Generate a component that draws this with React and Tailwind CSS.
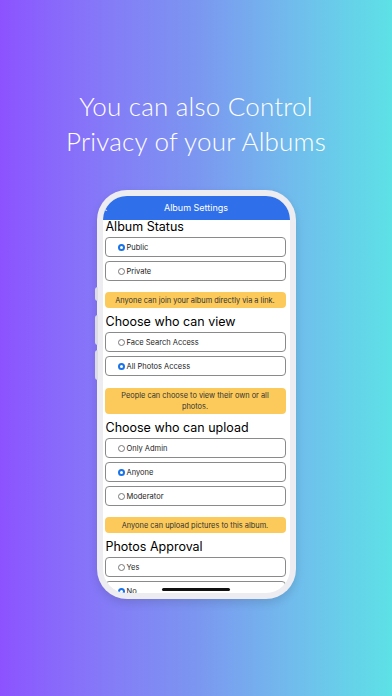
const Radio = ({ checked }) =>
  checked ? (
    <span className="w-[7px] h-[7px] rounded-full border-[2px] border-[#1a73e8] bg-white shrink-0" />
  ) : (
    <span className="w-[7px] h-[7px] rounded-full border border-[#777] bg-white shrink-0" />
  );

const Option = ({ label, checked }) => (
  <div className="h-[20px] border border-[#8a8a8a] rounded-[4px] flex items-center pl-[12px] gap-[2px]">
    <Radio checked={checked} />
    <span className="text-[7.5px] leading-[8px] text-[#222] translate-y-[0.5px]">{label}</span>
  </div>
);

const Heading = ({ children, first }) => (
  <div className={`${first ? "" : "mt-[7px]"} h-[14px] leading-[14px] text-[12.5px] font-normal text-black px-[1px]`}>
    {children}
  </div>
);

const Note = ({ children, tall }) => (
  <div
    className={`${tall ? "mt-[12px] h-[26px] px-[12px]" : "mt-[11px] h-[16px]"} bg-[#fcca5b] rounded-[4px] flex items-center justify-center text-center text-[7.4px] leading-[11px] text-[#333]`}
  >
    {children}
  </div>
);

const Group = ({ children }) => <div className="mt-[3px] flex flex-col gap-[4px]">{children}</div>;

export default function App() {
  return (
    <div
      className="w-[392px] h-[696px] overflow-hidden flex flex-col items-center bg-gradient-to-r from-[#8c52ff] via-[#7b96f0] to-[#5ce1e6]"
      style={{ fontFamily: "Inter, 'Noto Sans', sans-serif" }}
    >
      <div
        className="mt-[89px] text-white text-[26px] leading-[35px] font-light text-center tracking-[0.2px]"
        style={{ fontFamily: "Lato, 'Open Sans', sans-serif" }}
      >
        <div>You can also Control</div>
        <div>Privacy of your Albums</div>
      </div>

      <div className="relative mt-[31px] w-[199px] h-[409px] rounded-[30px] bg-[#ececf1] p-[6px] shadow-[0_4px_10px_rgba(0,0,0,0.12)]">
        <div className="absolute left-[-2px] top-[97px] w-[3px] h-[14px] rounded-l bg-[#dcdce4]" />
        <div className="absolute left-[-2px] top-[125px] w-[3px] h-[30px] rounded-l bg-[#dcdce4]" />
        <div className="absolute left-[-2px] top-[160px] w-[3px] h-[30px] rounded-l bg-[#dcdce4]" />

        <div className="h-full rounded-[24px] bg-white overflow-hidden flex flex-col">
          <div className="h-[24px] shrink-0 bg-[#2f6fe9] flex items-center relative">
            <span className="absolute left-[1px] text-white text-[10px] leading-none">‹</span>
            <span className="w-full text-center text-white text-[9px]">Album Settings</span>
          </div>
          <div className="pl-[2px] pr-[4px] flex flex-col">
            <Heading first>Album Status</Heading>
            <Group>
              <Option label="Public" checked />
              <Option label="Private" />
            </Group>
            <Note>Anyone can join your album directly via a link.</Note>

            <Heading>Choose who can view</Heading>
            <Group>
              <Option label="Face Search Access" />
              <Option label="All Photos Access" checked />
            </Group>
            <Note tall>People can choose to view their own or all photos.</Note>

            <Heading>Choose who can upload</Heading>
            <Group>
              <Option label="Only Admin" />
              <Option label="Anyone" checked />
              <Option label="Moderator" />
            </Group>
            <Note>Anyone can upload pictures to this album.</Note>

            <Heading>Photos Approval</Heading>
            <Group>
              <Option label="Yes" />
              <Option label="No" checked />
            </Group>
          </div>
        </div>
        <div className="absolute bottom-[8px] left-1/2 -translate-x-1/2 w-[68px] h-[3px] rounded-full bg-[#111]" />
      </div>
    </div>
  );
}
